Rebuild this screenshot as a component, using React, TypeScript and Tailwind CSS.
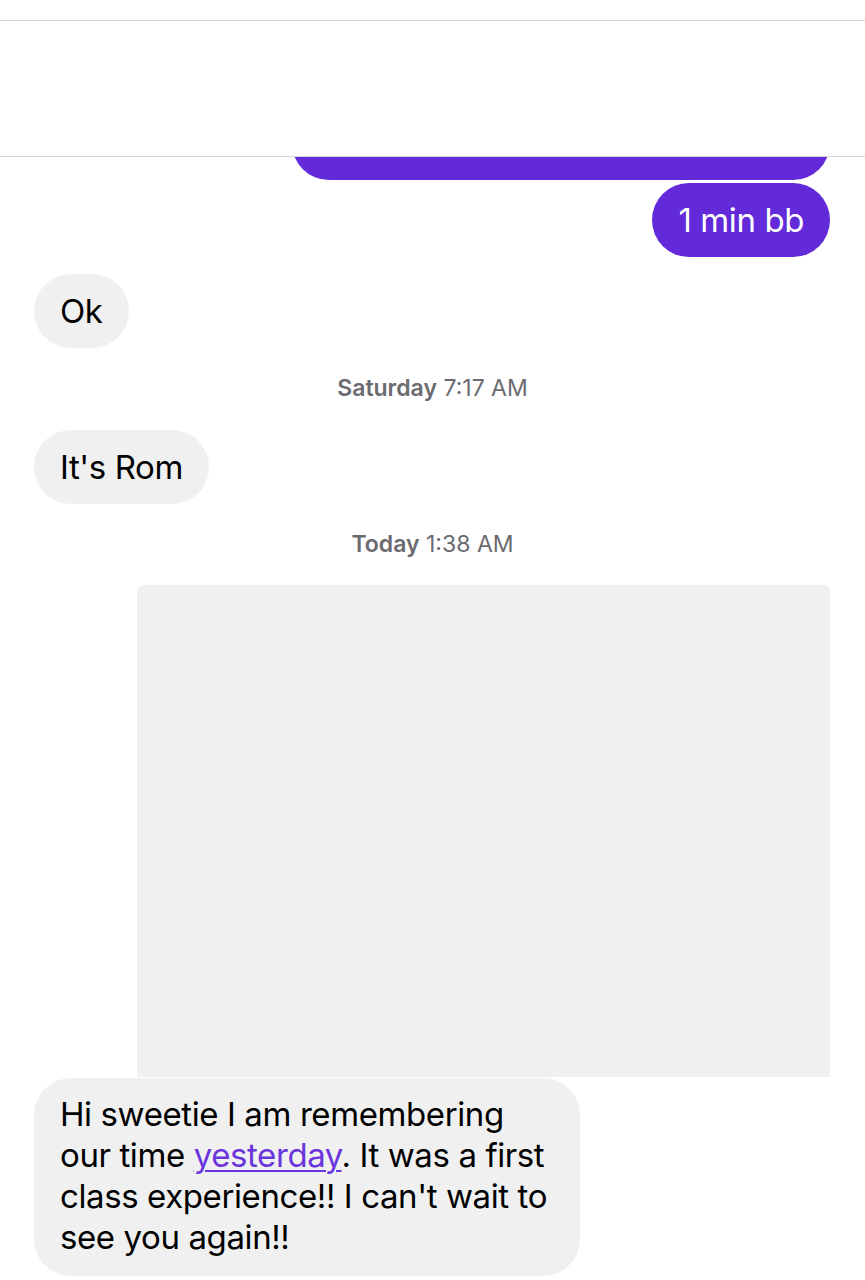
import React from "react";

const font = { fontFamily: "Inter, 'Noto Sans', sans-serif" };

function Bubble({ children, me, className = "" }: { children: React.ReactNode; me?: boolean; className?: string }) {
  return (
    <div
      className={`rounded-[37px] px-[26px] text-[33px] tracking-[-0.4px] ${
        me ? "bg-[#622ad9] text-white" : "bg-[#f0f0f0] text-black"
      } ${className}`}
    >
      {children}
    </div>
  );
}

function Stamp({ day, time, className = "" }: { day: string; time: string; className?: string }) {
  return (
    <div className={`text-center text-[23px] leading-[26px] text-[#6b6b70] ${className}`}>
      <span className="font-semibold">{day}</span> <span>{time}</span>
    </div>
  );
}

export default function App() {
  return (
    <div className="w-[865px] h-[1280px] bg-white overflow-hidden flex flex-col" style={font}>
      <div className="h-[21px] shrink-0 border-b border-[#d6d6d6]" />
      <div className="h-[136px] shrink-0 border-b border-[#d6d6d6] bg-white" />
      <div className="h-[23px] shrink-0 overflow-hidden flex justify-end items-end pr-[35px]">
        <div className="w-[538px] h-[74px] shrink-0 rounded-[37px] bg-[#622ad9]" />
      </div>
      <div className="flex justify-end pr-[35px] mt-[3px]">
        <Bubble me className="py-[16px] leading-[42px]">1 min bb</Bubble>
      </div>
      <div className="flex justify-start pl-[34px] mt-[17px]">
        <Bubble className="py-[16px] leading-[42px]">Ok</Bubble>
      </div>
      <Stamp day="Saturday" time="7:17 AM" className="mt-[27px]" />
      <div className="flex justify-start pl-[34px] mt-[29px]">
        <Bubble className="py-[16px] leading-[42px]">It's Rom</Bubble>
      </div>
      <Stamp day="Today" time="1:38 AM" className="mt-[27px]" />
      <div className="flex justify-end pr-[35px] mt-[28px]">
        <div className="w-[693px] h-[492px] rounded-t-[6px] bg-[#f0f0f0]" />
      </div>
      <div className="flex justify-start pl-[34px] mt-[1px]">
        <Bubble className="w-[546px] pt-[16px] pb-[18px] leading-[41px]">
          Hi sweetie I am remembering
          <br />
          our time{" "}
          <span className="text-[#6a35dc] underline decoration-[1.5px] underline-offset-[3px]">yesterday</span>. It was a first
          <br />
          class experience!! I can't wait to
          <br />
          see you again!!
        </Bubble>
      </div>
    </div>
  );
}
